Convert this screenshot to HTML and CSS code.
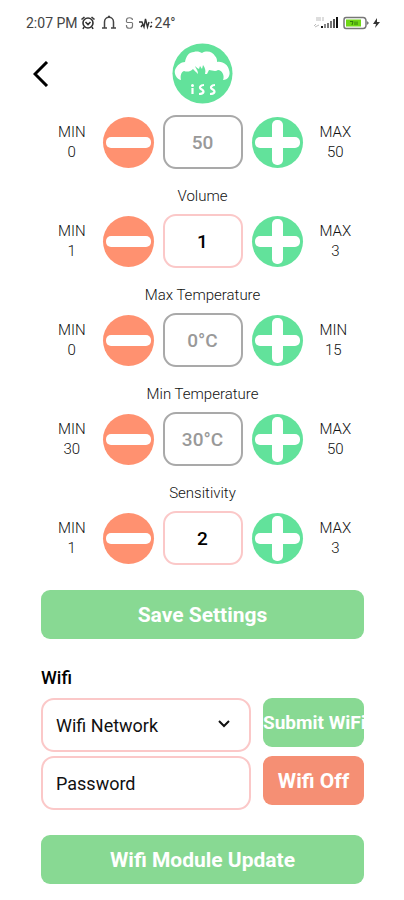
FILE: index.html
```html
<!DOCTYPE html>
<html lang="en">
<head>
    <meta charset="UTF-8">
    <meta name="viewport" content="width=device-width, initial-scale=1.0">
    <title>Settings</title>
    <link rel="stylesheet" href="styles.css">
</head>
<body>
    <svg class="sprite" aria-hidden="true">
        <symbol id="minus" viewBox="0 0 51 51">
            <rect x="3" y="20" width="45" height="11" rx="5" fill="#fff"/>
        </symbol>
        <symbol id="plus" viewBox="0 0 51 51">
            <rect x="3" y="20" width="45" height="11" rx="5" fill="#fff"/>
            <rect x="20" y="3" width="11" height="45" rx="5" fill="#fff"/>
        </symbol>
    </svg>

    <div class="status-bar">
        <div class="status-left">
            <span>2:07 PM</span>
            <!-- alarm -->
            <svg width="16" height="16" viewBox="0 0 16 16" fill="none" stroke="#333" stroke-width="1.6">
                <circle cx="8" cy="8" r="5"/>
                <path d="M1.5 4.5L4.5 2M14.5 4.5L11.500 2M5.500 7L8 9.500L10.500 7M4 12L3 14M12 12L13 14"/>
            </svg>
            <!-- bell -->
            <svg class="bell" width="16" height="16" viewBox="0 0 16 16" fill="none" stroke="#444" stroke-width="1.5">
                <path d="M1 13H6M10 13H15M3.500 13V7C3.500 0.800 12.500 0.800 12.500 7V13M7 1.500H9"/>
            </svg>
            <svg class="link" width="9" height="16" viewBox="0 0 9 16" fill="none" stroke="#777" stroke-width="1.2">
                <path d="M1.500 7V5C1.500 2 7.500 2 7.500 5M1.500 7.500H7.500M1.500 10V11C1.500 14 7.500 14 7.500 11V8"/>
            </svg>
            <svg width="14" height="16" viewBox="0 0 14 16" fill="none" stroke="#333" stroke-width="1.4">
                <path d="M0 7H3L5 12L6.500 4L8.500 12L10 7M2 12L4 9M12 8L13 7M11 12L13 11"/>
            </svg>
            <span>24°</span>
        </div>
        <div class="status-right">
            <!-- signal -->
            <svg width="26" height="16" viewBox="0 0 26 16">
                <path d="M3 3H6M3 5H6M7 2V6M9 3H11M9 5H11M1 11L3 9M2 12L6 10" stroke="#bbb" fill="none"/>
                <rect x="8" y="11" width="2" height="2" fill="#111"/>
                <rect x="11" y="9" width="2" height="4" fill="#888"/>
                <rect x="14" y="8" width="2" height="5" fill="#777"/>
                <rect x="17" y="6" width="2" height="7" fill="#777"/>
                <rect x="20" y="4" width="2" height="9" fill="#555"/>
                <rect x="23" y="2" width="2" height="11" fill="#111"/>
            </svg>
            <!-- battery -->
            <svg class="battery" width="26" height="14" viewBox="0 0 26 14">
                <path d="M3 1.500H20Q23 1.500 23 5V9Q23 12.500 20 12.500H3Q1 12.500 1 10V4Q1 1.500 3 1.500Z" fill="#fff" stroke="#777" stroke-width="1.5"/>
                <path d="M24 5L26 7L24 9Z" fill="#777"/>
                <rect x="3" y="3.500" width="15" height="7" fill="#6fd714"/>
                <path d="M7 5.500H10L9 9M12 5.500V9M14 5.500V9" stroke="#327a10" fill="none"/>
            </svg>
            <!-- charging -->
            <svg width="7" height="12" viewBox="0 0 7 12">
                <path d="M4 1L0 7H3L2 11L7 5H4Z" fill="#333"/>
            </svg>
        </div>
    </div>

    <header class="header">
        <button type="button" class="back" aria-label="Back">
            <svg width="16" height="26" viewBox="0 0 16 26" fill="none" stroke="#000" stroke-width="3">
                <path d="M14 1L2 13L14 25"/>
            </svg>
        </button>
        <svg class="logo" width="61" height="61" viewBox="0 0 61 61" role="img" aria-label="Logo">
            <circle cx="30.500" cy="30.500" r="30" fill="#62e29b"/>
            <path fill="#fff" d="M9 37C4 36 2 30 3 27C5 22 9 19 13 19C14 13 17 9 22 9C25 8 28 9 30 10C35 7 41 9 43 13C45 15 45 17 45 19C51 18 56 22 57 27C59 32 56 37 51 37C53 33 50 27 46 27C43 29 40 27 37 27L35 31L33 31C34 27 33 25 31 22L30 26L28 23L27 26C25 25 24 24 23 23C24 26 26 27 26 31C24 29 22 27 21 26C18 29 15 29 12 28C9 29 8 33 9 37Z"/>
            <circle cx="20.500" cy="42.500" r="1.500" fill="#fff"/>
            <path d="M20.500 45V51M32 42C28 42 27 45 29 46C33 48 32 51 27 51M43 42C39 42 38 45 40 46C44 48 43 51 38 51" fill="none" stroke="#fff" stroke-width="2.2"/>
        </svg>
    </header>

    <main class="content">
        <form class="settings">
            <div class="stepper">
                <div class="limit"><span>MIN<br>0</span></div>
                <button type="button" class="round minus" aria-label="Decrease"><svg><use href="#minus"/></svg></button>
                <input type="text" class="value" value="50" aria-label="Level" disabled>
                <button type="button" class="round plus" aria-label="Increase"><svg><use href="#plus"/></svg></button>
                <div class="limit limit-right"><span>MAX<br>50</span></div>
            </div>

            <label class="name" for="volume">Volume</label>
            <div class="stepper">
                <div class="limit"><span>MIN<br>1</span></div>
                <button type="button" class="round minus" aria-label="Decrease volume"><svg><use href="#minus"/></svg></button>
                <input type="text" class="value" id="volume" value="1">
                <button type="button" class="round plus" aria-label="Increase volume"><svg><use href="#plus"/></svg></button>
                <div class="limit limit-right"><span>MAX<br>3</span></div>
            </div>

            <label class="name" for="maxTemp">Max Temperature</label>
            <div class="stepper">
                <div class="limit"><span>MIN<br>0</span></div>
                <button type="button" class="round minus" aria-label="Decrease max temperature"><svg><use href="#minus"/></svg></button>
                <input type="text" class="value" id="maxTemp" value="0°C" disabled>
                <button type="button" class="round plus" aria-label="Increase max temperature"><svg><use href="#plus"/></svg></button>
                <div class="limit limit-right"><span>MIN<br>15</span></div>
            </div>

            <label class="name" for="minTemp">Min Temperature</label>
            <div class="stepper">
                <div class="limit"><span>MIN<br>30</span></div>
                <button type="button" class="round minus" aria-label="Decrease min temperature"><svg><use href="#minus"/></svg></button>
                <input type="text" class="value" id="minTemp" value="30°C" disabled>
                <button type="button" class="round plus" aria-label="Increase min temperature"><svg><use href="#plus"/></svg></button>
                <div class="limit limit-right"><span>MAX<br>50</span></div>
            </div>

            <label class="name" for="sensitivity">Sensitivity</label>
            <div class="stepper">
                <div class="limit"><span>MIN<br>1</span></div>
                <button type="button" class="round minus" aria-label="Decrease sensitivity"><svg><use href="#minus"/></svg></button>
                <input type="text" class="value" id="sensitivity" value="2">
                <button type="button" class="round plus" aria-label="Increase sensitivity"><svg><use href="#plus"/></svg></button>
                <div class="limit limit-right"><span>MAX<br>3</span></div>
            </div>

            <button type="button" class="btn save">Save Settings</button>
        </form>

        <form class="wifi">
            <h2>Wifi</h2>
            <div class="wifi-grid">
                <div class="select-wrap">
                    <select class="field" aria-label="Wifi Network">
                        <option>Wifi Network</option>
                    </select>
                    <svg class="chevron" width="12" height="8" viewBox="0 0 12 8" fill="none" stroke="#111" stroke-width="2">
                        <path d="M1 1L6 6L11 1"/>
                    </svg>
                </div>
                <button type="button" class="btn btn-small">Submit WiFi</button>
                <input type="password" class="field" placeholder="Password" aria-label="Password">
                <button type="button" class="btn btn-off">Wifi Off</button>
            </div>
            <button type="button" class="btn">Wifi Module Update</button>
        </form>
    </main>
</body>
</html>
```

FILE: styles.css
```css
* {
    box-sizing: border-box;
}

body {
    margin: 0;
    background-color: #fff;
    color: #000;
    font-family: Roboto, 'Liberation Sans', sans-serif;
}

button,
input,
select {
    font-family: inherit;
    margin: 0;
    padding: 0;
}

button {
    border: none;
    cursor: pointer;
}

svg {
    display: block;
    flex-shrink: 0;
}

.sprite {
    display: none;
}

.status-bar {
    display: flex;
    justify-content: space-between;
    padding: 14px 24px 0 26px;
    font-size: 14px;
    line-height: 18px;
    color: #444;
}

.status-left,
.status-right {
    display: flex;
    align-items: center;
    gap: 2px;
}

.bell,
.link {
    margin: 0 3px;
}

.battery {
    margin: 0 2px;
}

.header {
    display: grid;
    grid-template-columns: 1fr auto 1fr;
    align-items: center;
    padding: 11px 33px;
}

.back {
    justify-self: start;
    background: none;
}

.content {
    padding: 0 40px 16px 41px;
}

.stepper {
    display: grid;
    grid-template-columns: 1fr 51px 80px 51px 1fr;
    column-gap: 9px;
    align-items: center;
}

.limit {
    display: flex;
    justify-content: center;
    margin-right: -9px;
    font-size: 15px;
    font-weight: 300;
    line-height: 20px;
    text-align: center;
    color: #111;
}

.limit-right {
    justify-content: flex-start;
    margin: 0;
    padding-left: 8px;
}

.round {
    width: 51px;
    height: 51px;
    border-radius: 50%;
}

.round svg {
    width: 51px;
    height: 51px;
}

.minus {
    background-color: #ff9170;
}

.plus {
    background-color: #62e29b;
}

.value {
    width: 100%;
    height: 54px;
    border: 2px solid #fbc8c8;
    border-radius: 13px;
    background-color: #fff;
    color: #000;
    font-size: 19px;
    font-weight: 500;
    text-align: center;
}

.value:disabled {
    border-color: #a9a9a9;
    color: #999;
}

.name {
    display: block;
    padding: 18px 0 9px;
    font-size: 15px;
    font-weight: 300;
    line-height: 18px;
    text-align: center;
    color: #111;
}

.btn {
    display: block;
    width: 100%;
    height: 49px;
    border-radius: 9px;
    background-color: #88d993;
    color: #fff;
    font-size: 21px;
    font-weight: 700;
    white-space: nowrap;
}

.save {
    margin-top: 25px;
}

.wifi h2 {
    margin: 28px 0 9px;
    font-size: 18px;
    font-weight: 500;
    line-height: 22px;
}

.wifi-grid {
    display: grid;
    grid-template-columns: 1fr 101px;
    gap: 4px 12px;
    margin-bottom: 25px;
}

.select-wrap {
    position: relative;
}

.field {
    display: block;
    width: 100%;
    height: 54px;
    padding: 0 13px;
    border: 2px solid #fbc8c8;
    border-radius: 13px;
    background-color: #fff;
    color: #111;
    font-size: 18px;
    appearance: none;
}

.field::placeholder {
    color: #111;
    opacity: 1;
}

.chevron {
    position: absolute;
    right: 21px;
    top: 22px;
    pointer-events: none;
}

.btn-small {
    font-size: 19px;
}

.btn-off {
    background-color: #f58f74;
}
```
